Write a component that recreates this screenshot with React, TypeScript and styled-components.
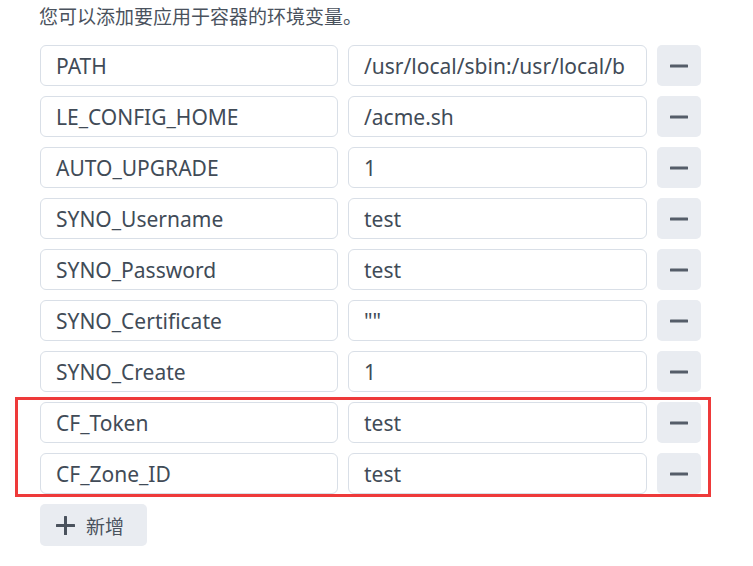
import React from "react";
import styled, { createGlobalStyle } from "styled-components";

const Global = createGlobalStyle`
  html, body { margin: 0; padding: 0; background: #ffffff; }
  body { font-family: "Noto Sans", "Noto Sans CJK SC", sans-serif; }
`;

const Page = styled.div`
  padding: 0 0 0 40px;
  display: flex;
  flex-direction: column;
  align-items: flex-start;
  color: #414b57;
`;

const Intro = styled.p`
  margin: 0 0 13px -1px;
  height: 32px;
  line-height: 32px;
  font-size: 19px;
  color: #4a525d;
  font-family: "Noto Sans CJK SC", sans-serif;
`;

const List = styled.div`
  display: flex;
  flex-direction: column;
  gap: 10px;
  width: 661px;
`;

const Group = styled.div<{ $highlight?: boolean }>`
  display: flex;
  flex-direction: column;
  gap: 10px;
  position: relative;
  &::before {
    content: "";
    display: ${(p) => (p.$highlight ? "block" : "none")};
    position: absolute;
    top: -5px;
    bottom: -3px;
    left: -25px;
    right: -10px;
    border: 3px solid #ee3a3a;
    pointer-events: none;
  }
`;

const Row = styled.div`
  display: grid;
  grid-template-columns: 298px 299px 44px;
  gap: 10px;
  height: 41px;
`;

const Field = styled.div`
  box-sizing: border-box;
  height: 41px;
  border: 1px solid #d9dfe7;
  border-radius: 6px;
  padding: 0 15px;
  display: flex;
  align-items: center;
  font-size: 21px;
  color: #414b57;
  white-space: nowrap;
  overflow: hidden;
  background: #fff;
`;

const IconButton = styled.button`
  box-sizing: border-box;
  height: 41px;
  width: 44px;
  border: none;
  border-radius: 5px;
  background: #e9ecf1;
  display: flex;
  align-items: center;
  justify-content: center;
  padding: 0;
  cursor: pointer;
`;

const AddButton = styled.button`
  box-sizing: border-box;
  margin-top: 10px;
  width: 107px;
  height: 42px;
  border: none;
  border-radius: 5px;
  background: #e9ecf1;
  display: flex;
  align-items: center;
  gap: 11px;
  padding: 0 0 0 16px;
  font-size: 19px;
  color: #4a525d;
  font-family: "Noto Sans CJK SC", sans-serif;
  cursor: pointer;
`;

const Minus = () => (
  <svg width="18" height="18" viewBox="0 0 18 18">
    <rect x="0" y="7.5" width="18" height="3" rx="0.5" fill="#555d69" />
  </svg>
);

const Plus = () => (
  <svg width="19" height="19" viewBox="0 0 19 19">
    <rect x="0" y="8" width="19" height="3" rx="0.5" fill="#4a525d" />
    <rect x="8" y="0" width="3" height="19" rx="0.5" fill="#4a525d" />
  </svg>
);

const vars: [string, string][] = [
  ["PATH", "/usr/local/sbin:/usr/local/b"],
  ["LE_CONFIG_HOME", "/acme.sh"],
  ["AUTO_UPGRADE", "1"],
  ["SYNO_Username", "test"],
  ["SYNO_Password", "test"],
  ["SYNO_Certificate", "\"\""],
  ["SYNO_Create", "1"],
];

const highlighted: [string, string][] = [
  ["CF_Token", "test"],
  ["CF_Zone_ID", "test"],
];

const VarRow = ({ k, v }: { k: string; v: string }) => (
  <Row>
    <Field>{k}</Field>
    <Field>{v}</Field>
    <IconButton aria-label="remove">
      <Minus />
    </IconButton>
  </Row>
);

export default function App() {
  return (
    <>
      <Global />
      <Page>
        <Intro>您可以添加要应用于容器的环境变量。</Intro>
        <List>
          <Group>
            {vars.map(([k, v]) => (
              <VarRow key={k} k={k} v={v} />
            ))}
          </Group>
          <Group $highlight>
            {highlighted.map(([k, v]) => (
              <VarRow key={k} k={k} v={v} />
            ))}
          </Group>
        </List>
        <AddButton>
          <Plus />
          新增
        </AddButton>
      </Page>
    </>
  );
}
